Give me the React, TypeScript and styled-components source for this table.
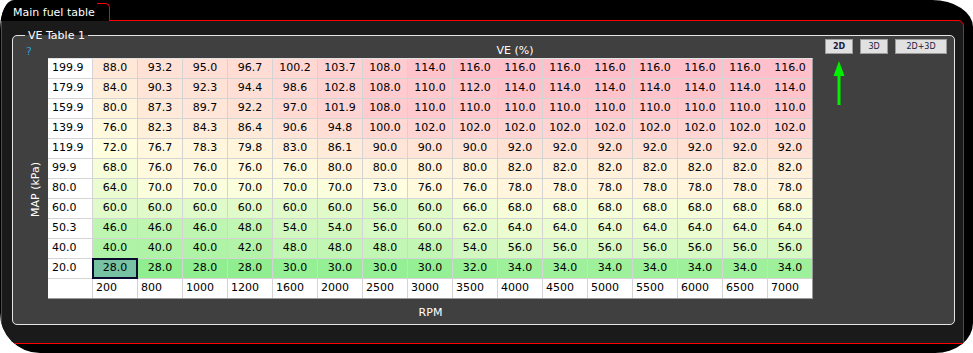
import React from "react";
import styled, { createGlobalStyle } from "styled-components";

const MAP_BINS = ["199.9", "179.9", "159.9", "139.9", "119.9", "99.9", "80.0", "60.0", "50.3", "40.0", "20.0"];
const RPM_BINS = [200, 800, 1000, 1200, 1600, 2000, 2500, 3000, 3500, 4000, 4500, 5000, 5500, 6000, 6500, 7000];

const VE: number[][] = [
  [88.0, 93.2, 95.0, 96.7, 100.2, 103.7, 108.0, 114.0, 116.0, 116.0, 116.0, 116.0, 116.0, 116.0, 116.0, 116.0],
  [84.0, 90.3, 92.3, 94.4, 98.6, 102.8, 108.0, 110.0, 112.0, 114.0, 114.0, 114.0, 114.0, 114.0, 114.0, 114.0],
  [80.0, 87.3, 89.7, 92.2, 97.0, 101.9, 108.0, 110.0, 110.0, 110.0, 110.0, 110.0, 110.0, 110.0, 110.0, 110.0],
  [76.0, 82.3, 84.3, 86.4, 90.6, 94.8, 100.0, 102.0, 102.0, 102.0, 102.0, 102.0, 102.0, 102.0, 102.0, 102.0],
  [72.0, 76.7, 78.3, 79.8, 83.0, 86.1, 90.0, 90.0, 90.0, 92.0, 92.0, 92.0, 92.0, 92.0, 92.0, 92.0],
  [68.0, 76.0, 76.0, 76.0, 76.0, 80.0, 80.0, 80.0, 80.0, 82.0, 82.0, 82.0, 82.0, 82.0, 82.0, 82.0],
  [64.0, 70.0, 70.0, 70.0, 70.0, 70.0, 73.0, 76.0, 76.0, 78.0, 78.0, 78.0, 78.0, 78.0, 78.0, 78.0],
  [60.0, 60.0, 60.0, 60.0, 60.0, 60.0, 56.0, 60.0, 66.0, 68.0, 68.0, 68.0, 68.0, 68.0, 68.0, 68.0],
  [46.0, 46.0, 46.0, 48.0, 54.0, 54.0, 56.0, 60.0, 62.0, 64.0, 64.0, 64.0, 64.0, 64.0, 64.0, 64.0],
  [40.0, 40.0, 40.0, 42.0, 48.0, 48.0, 48.0, 48.0, 54.0, 56.0, 56.0, 56.0, 56.0, 56.0, 56.0, 56.0],
  [28.0, 28.0, 28.0, 28.0, 30.0, 30.0, 30.0, 30.0, 32.0, 34.0, 34.0, 34.0, 34.0, 34.0, 34.0, 34.0],
];

// green -> light yellow -> pink, same as the tuner
const LOW = [144, 238, 144];
const MID = [255, 255, 224];
const HIGH = [255, 192, 203];
const MIN_VE = 28;
const MAX_VE = 116;

const mix = (a: number[], b: number[], t: number) =>
  `rgb(${a.map((c, i) => Math.round(c + (b[i] - c) * t)).join(",")})`;

const cellColor = (v: number) => {
  const half = (MAX_VE - MIN_VE) / 2;
  const mid = MIN_VE + half;
  return v <= mid ? mix(LOW, MID, (v - MIN_VE) / half) : mix(MID, HIGH, (v - mid) / half);
};

const GlobalStyle = createGlobalStyle`
  html, body {
    margin: 0;
    padding: 0;
    background: #fff;
  }
  body {
    font-family: "DejaVu Sans", Verdana, sans-serif;
    font-size: 11px;
  }
`;

const App = () => {
  return (
    <>
      <GlobalStyle />
      <Window>
        <TabBar>
          <Tab>Main fuel table</Tab>
        </TabBar>
        <Panel>
          <Group>
            <Legend>VE Table 1</Legend>
            <GroupBody>
              <LeftCol>
                <Help>?</Help>
                <AxisYLabel>MAP (kPa)</AxisYLabel>
              </LeftCol>
              <MainCol>
                <AxisXHead>VE (%)</AxisXHead>
                <Grid>
                  {VE.map((row, r) => (
                    <React.Fragment key={MAP_BINS[r]}>
                      <AxisCell>{MAP_BINS[r]}</AxisCell>
                      {row.map((v, c) => (
                        <DataCell
                          key={c}
                          $selected={r === VE.length - 1 && c === 0}
                          style={{ backgroundColor: r === VE.length - 1 && c === 0 ? undefined : cellColor(v) }}
                        >
                          {v.toFixed(1)}
                        </DataCell>
                      ))}
                    </React.Fragment>
                  ))}
                  <AxisCell />
                  {RPM_BINS.map((rpm) => (
                    <AxisCell key={rpm} $small>
                      {rpm}
                    </AxisCell>
                  ))}
                </Grid>
                <AxisXFoot>RPM</AxisXFoot>
              </MainCol>
              <RightCol>
                <ButtonRow>
                  <ViewButton $w={28} $bold>
                    2D
                  </ViewButton>
                  <ViewButton $w={28}>3D</ViewButton>
                  <ViewButton $w={52}>2D+3D</ViewButton>
                </ButtonRow>
                <Arrow width="12" height="44" viewBox="0 0 12 44">
                  <polygon points="6,0 0.5,15 11.5,15" fill="#00f000" />
                  <rect x="4.5" y="14" width="3" height="30" fill="#00f000" />
                </Arrow>
              </RightCol>
            </GroupBody>
          </Group>
        </Panel>
      </Window>
    </>
  );
};

// Style
const Window = styled.div`
  width: 973px;
  height: 353px;
  background: #000;
  border-radius: 14px 41px 38px 40px / 30px 27px 30px 40px;
  overflow: hidden;
  display: flex;
  flex-direction: column;
  color: #fff;
`;

const TabBar = styled.div`
  display: flex;
  align-items: flex-end;
  height: 20px;
  flex: none;
`;

const Tab = styled.div`
  position: relative;
  z-index: 1;
  width: 110px;
  height: 18px;
  margin-bottom: -1px;
  padding: 3px 0 0 13px;
  box-sizing: border-box;
  background: #000;
  line-height: 13px;
  white-space: nowrap;

  &::after {
    content: "";
    position: absolute;
    top: 0;
    right: 0;
    width: 12px;
    height: 17px;
    border-top: 1px solid #f00;
    border-right: 1px solid #f00;
    border-top-right-radius: 5px;
  }
`;

const Panel = styled.div`
  height: 324px;
  margin: 0 9px 9px 1px;
  padding: 8px 8px 0 10px;
  box-sizing: border-box;
  background: #1a1a1a;
  border: 1px solid #f00;
  border-top-right-radius: 6px;
`;

const Group = styled.fieldset`
  margin: 0;
  padding: 0;
  min-width: 0;
  height: 296px;
  box-sizing: border-box;
  border: 1px solid #e4e4e4;
  border-radius: 5px;
  background: #404040;
`;

const Legend = styled.legend`
  margin-left: 12px;
  padding: 0 3px;
  line-height: 13px;
  color: #fff;
`;

const GroupBody = styled.div`
  display: flex;
  margin-top: -6px;
`;

const LeftCol = styled.div`
  flex: none;
  width: 35px;
  display: flex;
  flex-direction: column;
  align-items: flex-start;
`;

const Help = styled.div`
  margin-top: 9px;
  padding-left: 13px;
  line-height: 13px;
  color: #2f9fd8;
`;

const AxisYLabel = styled.div`
  margin: 104px 0 0 16px;
  writing-mode: vertical-rl;
  transform: rotate(180deg);
  line-height: 13px;
  white-space: nowrap;
`;

const MainCol = styled.div`
  flex: none;
  width: 765px;
`;

const AxisXHead = styled.div`
  height: 22px;
  padding: 8px 0 0 169px;
  box-sizing: border-box;
  line-height: 13px;
  text-align: center;
`;

const Grid = styled.div`
  display: grid;
  grid-template-columns: repeat(17, 44px);
  grid-auto-rows: 19px;
  gap: 1px;
  background: #d4d4d4;
  border-top: 1px solid #e2e2e2;
  border-right: 1px solid #9a9a9a;
  border-bottom: 1px solid #9a9a9a;
  color: #000;
`;

const Cell = styled.div`
  line-height: 18px;
  white-space: nowrap;
  overflow: hidden;
`;

const AxisCell = styled(Cell)<{ $small?: boolean }>`
  background: #fff;
  padding-left: ${(p) => (p.$small ? 3 : 4)}px;
`;

const DataCell = styled(Cell)<{ $selected?: boolean }>`
  text-align: center;
  overflow: visible;
  background: ${(p) => (p.$selected ? "#76c2a3" : "transparent")};
  outline: ${(p) => (p.$selected ? "2px solid #0a0a2e" : "none")};
  outline-offset: -1px;
`;

const AxisXFoot = styled.div`
  margin-top: 7px;
  line-height: 13px;
  text-align: center;
`;

const RightCol = styled.div`
  flex: none;
  margin-left: 12px;
  padding-top: 3px;
  display: flex;
  flex-direction: column;
  align-items: flex-start;
`;

const ButtonRow = styled.div`
  display: flex;
  gap: 7px;
`;

const ViewButton = styled.button<{ $w: number; $bold?: boolean }>`
  width: ${(p) => p.$w}px;
  height: 15px;
  padding: 0;
  border: 1px solid #9c9c9c;
  border-radius: 0;
  background: #e1e1e1;
  color: #1a1a40;
  font-family: "DejaVu Sans", Verdana, sans-serif;
  font-size: 8px;
  font-weight: ${(p) => (p.$bold ? 700 : 400)};
  line-height: 13px;
`;

const Arrow = styled.svg`
  display: block;
  margin: 7px 0 0 8px;
`;

export default App;
